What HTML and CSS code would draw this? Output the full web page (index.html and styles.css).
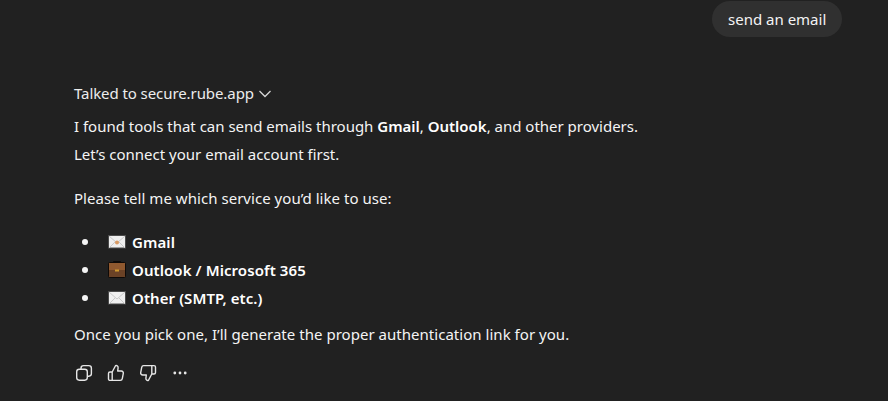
FILE: index.html
```html
<!DOCTYPE html>
<html lang="en">
<head>
<meta charset="utf-8">
<title>Chat</title>
<link rel="stylesheet" href="styles.css">
</head>
<body>
<main class="chat">
  <div class="user-row"><div class="bubble">send an email</div></div>
  <article class="reply">
    <div class="tool-line"><span class="tool-name">Talked to secure.rube.app</span>
      <svg class="chev" width="14" height="14" viewBox="0 0 14 14"><path d="M1.500 5 7 10.500 12.500 5" fill="none" stroke="#d6d6d6" stroke-width="1.300"/></svg>
    </div>
    <p class="line first">I found tools that can send emails through <b>Gmail</b>, <b>Outlook</b>, and other providers.</p>
    <p class="line">Let’s connect your email account first.</p>
    <p class="line gap">Please tell me which service you’d like to use:</p>
    <ul class="list">
      <li><svg class="emoji" width="18" height="18" viewBox="0 0 18 18"><rect x=".5" y="2.500" width="17" height="12.500" fill="#eee" stroke="#4a4a4a"/><path d="M1 3l8 7 8-7M1 15l6-6M17 15l-6-6" fill="none" stroke="#c8c8c8"/><circle cx="9" cy="9.500" r="2" fill="#d99a62"/></svg><b>Gmail</b></li>
      <li><svg class="emoji" width="18" height="18" viewBox="0 0 18 18"><path d="M5.500 2V.5h7V2" fill="none" stroke="#0e0a08"/><rect x=".5" y="1.500" width="17" height="15" rx="1" fill="#6b4226" stroke="#0e0a08"/><rect x="1" y="2" width="16" height="7" fill="#90592f"/><rect x="7" y="8.500" width="4" height="2" fill="#d09a2e"/></svg><b>Outlook / Microsoft 365</b></li>
      <li><svg class="emoji" width="18" height="18" viewBox="0 0 18 18"><rect x=".5" y="2.500" width="17" height="12.500" fill="#efefef" stroke="#4a4a4a"/><path d="M1 3l8 7 8-7M1 15l6-6M17 15l-6-6" fill="none" stroke="#c8c8c8"/></svg><b>Other (SMTP, etc.)</b></li>
    </ul>
    <p class="line closing">Once you pick one, I’ll generate the proper authentication link for you.</p>
    <div class="actions">
      <svg width="20" height="20" viewBox="0 0 20 20" fill="none" stroke="#e6e6e6" stroke-width="1.400"><rect x="2.700" y="6.200" width="10.600" height="11" rx="2.600"/><path d="M7 6V5.200a2.600 2.600 0 0 1 2.600-2.600h5.200a2.600 2.600 0 0 1 2.600 2.600v5.400a2.600 2.600 0 0 1-2.600 2.600h-1.400"/></svg>
      <svg width="20" height="20" viewBox="0 0 20 20" fill="none" stroke="#e6e6e6" stroke-width="1.400" stroke-linejoin="round"><path d="M6.200 9v8.400H4a1.500 1.500 0 0 1-1.500-1.500v-5.400A1.500 1.500 0 0 1 4 9h2.200l3.300-6.300c1.500-.5 2.800.6 2.600 2.200L11.700 8h3.600a2 2 0 0 1 2 2.400l-1 5.300a2 2 0 0 1-2 1.700H6.200"/></svg>
      <svg width="20" height="20" viewBox="0 0 20 20" fill="none" stroke="#e6e6e6" stroke-width="1.400" stroke-linejoin="round"><path d="M13.800 11V2.600H16a1.500 1.500 0 0 1 1.500 1.500v5.400A1.500 1.500 0 0 1 16 11h-2.200l-3.300 6.300c-1.500.5-2.800-.6-2.600-2.200L8.300 12H4.700a2 2 0 0 1-2-2.400l1-5.300a2 2 0 0 1 2-1.700h8.100"/></svg>
      <svg width="20" height="20" viewBox="0 0 20 20" fill="#e6e6e6"><circle cx="4.800" cy="10" r="1.400"/><circle cx="10" cy="10" r="1.400"/><circle cx="15.200" cy="10" r="1.400"/></svg>
    </div>
  </article>
</main>
</body>
</html>
```
FILE: styles.css
```css
* { box-sizing: border-box; }
html, body { margin: 0; height: 100%; }
body {
  background: #212121;
  color: #f4f4f4;
  font-family: "Noto Sans", "Open Sans", "Liberation Sans", sans-serif;
  font-size: 15px;
  overflow: hidden;
}
.chat { padding: 1px 46px 0 74px; }
.user-row { display: flex; justify-content: flex-end; }
.bubble {
  background: #303030;
  border-radius: 18px;
  height: 36px;
  line-height: 36px;
  padding: 0 16px;
  width: 130px;
  white-space: nowrap;
}
.reply { margin-top: 42px; }
.tool-line {
  display: flex;
  align-items: center;
  gap: 4px;
  height: 28px;
  margin-bottom: 5px;
  color: #ececec;
}
.tool-name { letter-spacing: -0.08px; }
.line { margin: 0; height: 28px; line-height: 28px; white-space: nowrap; }
.line b, .list b { font-weight: 600; color: #fff; }
.list b { letter-spacing: 0.08px; }
.first { letter-spacing: -0.01px; }
.gap { margin-top: 16px; letter-spacing: 0.04px; }
.list { list-style: none; margin: 16px 0 0; padding: 0 0 0 8px; }
.list li { display: flex; align-items: center; height: 28px; white-space: nowrap; }
.list li::before {
  content: "";
  width: 6px;
  height: 6px;
  border-radius: 50%;
  background: #f4f4f4;
  margin-right: 20px;
}
.emoji { margin-right: 6px; }
.closing { margin-top: 8px; letter-spacing: 0.03px; }
.actions { display: flex; gap: 12px; margin-top: 15px; }
```
